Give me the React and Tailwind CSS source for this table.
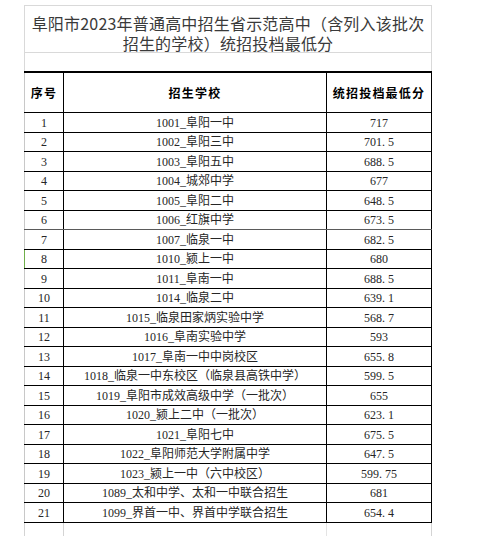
import React from "react";

const rows = [
  ["1", "1001_阜阳一中", "717"],
  ["2", "1002_阜阳三中", "701.5"],
  ["3", "1003_阜阳五中", "688.5"],
  ["4", "1004_城郊中学", "677"],
  ["5", "1005_阜阳二中", "648.5"],
  ["6", "1006_红旗中学", "673.5"],
  ["7", "1007_临泉一中", "682.5"],
  ["8", "1010_颍上一中", "680"],
  ["9", "1011_阜南一中", "688.5"],
  ["10", "1014_临泉二中", "639.1"],
  ["11", "1015_临泉田家炳实验中学", "568.7"],
  ["12", "1016_阜南实验中学", "593"],
  ["13", "1017_阜南一中中岗校区", "655.8"],
  ["14", "1018_临泉一中东校区（临泉县高铁中学）", "599.5"],
  ["15", "1019_阜阳市成效高级中学（一批次）", "655"],
  ["16", "1020_颍上二中（一批次）", "623.1"],
  ["17", "1021_阜阳七中", "675.5"],
  ["18", "1022_阜阳师范大学附属中学", "647.5"],
  ["19", "1023_颍上一中（六中校区）", "599.75"],
  ["20", "1089_太和中学、太和一中联合招生", "681"],
  ["21", "1099_界首一中、界首中学联合招生", "654.4"],
];

function Num({ v }) {
  const parts = v.split(".");
  if (parts.length === 1) return <span>{v}</span>;
  return (
    <span>
      {parts[0]}
      <span className="inline-block w-[6px] text-left">.</span>
      {parts[1]}
    </span>
  );
}

export default function App() {
  const dataFont = {
    fontFamily: '"Liberation Serif", "Noto Sans CJK SC", serif',
  };
  return (
    <div
      className="w-[481px] h-[536px] bg-white overflow-hidden pt-[5px] pl-[24px]"
      style={{ fontFamily: '"Noto Sans CJK SC", "Noto Sans", sans-serif' }}
    >
      <div className="w-[408px] flex flex-col">
        {/* Title */}
        <div className="h-[48px] border-t border-b border-l border-r border-[#d9d9d9] pt-[7px] text-[16px] leading-[20px] text-[#3a3a3a] text-center tracking-[0.2px]">
          <div className="whitespace-nowrap h-[20px]">阜阳市2023年普通高中招生省示范高中（含列入该批次</div>
          <div className="whitespace-nowrap h-[20px]">招生的学校）统招投档最低分</div>
        </div>
        {/* empty row */}
        <div className="h-[18px] border-l border-r border-[#d9d9d9]"></div>
        {/* header */}
        <div className="h-[42px] grid grid-cols-[40px_263px_105px] border-t-2 border-b border-t-black border-b-black text-[12px] font-bold text-black tracking-[1.2px]">
          <div className="border-l border-l-[#c8c8c8] border-r border-r-black flex items-center justify-center">序号</div>
          <div className="border-r border-r-black flex items-center justify-center">招生学校</div>
          <div className="border-r border-r-black flex items-center justify-center">统招投档最低分</div>
        </div>
        {/* rows */}
        {rows.map((r, i) => (
          <div
            key={r[0]}
            className={
              "grid grid-cols-[40px_263px_105px] border-b text-[12px] text-[#262626] " +
              (i % 2 === 0 ? "h-[20px] " : "h-[19px] ") +
              (i === 5 ? "border-b-[#5a5a5a]" : "border-b-black")
            }
            style={dataFont}
          >
            <div
              className={
                "border-l border-r border-r-black flex items-center justify-center " +
                (i === 7 ? "border-l-[#6fae4a]" : "border-l-[#c8c8c8]")
              }
            >
              {r[0]}
            </div>
            <div className="border-r border-r-black flex items-center justify-center whitespace-nowrap">
              {r[1]}
            </div>
            <div className="border-r border-r-black flex items-center justify-center">
              <Num v={r[2]} />
            </div>
          </div>
        ))}
        {/* gridline stubs below */}
        <div className="h-[14px] grid grid-cols-[40px_263px_105px]">
          <div className="border-l border-r border-[#d4d4d4]"></div>
          <div className="border-r border-[#e4e4e4]"></div>
          <div className="border-r border-[#d4d4d4]"></div>
        </div>
      </div>
    </div>
  );
}
